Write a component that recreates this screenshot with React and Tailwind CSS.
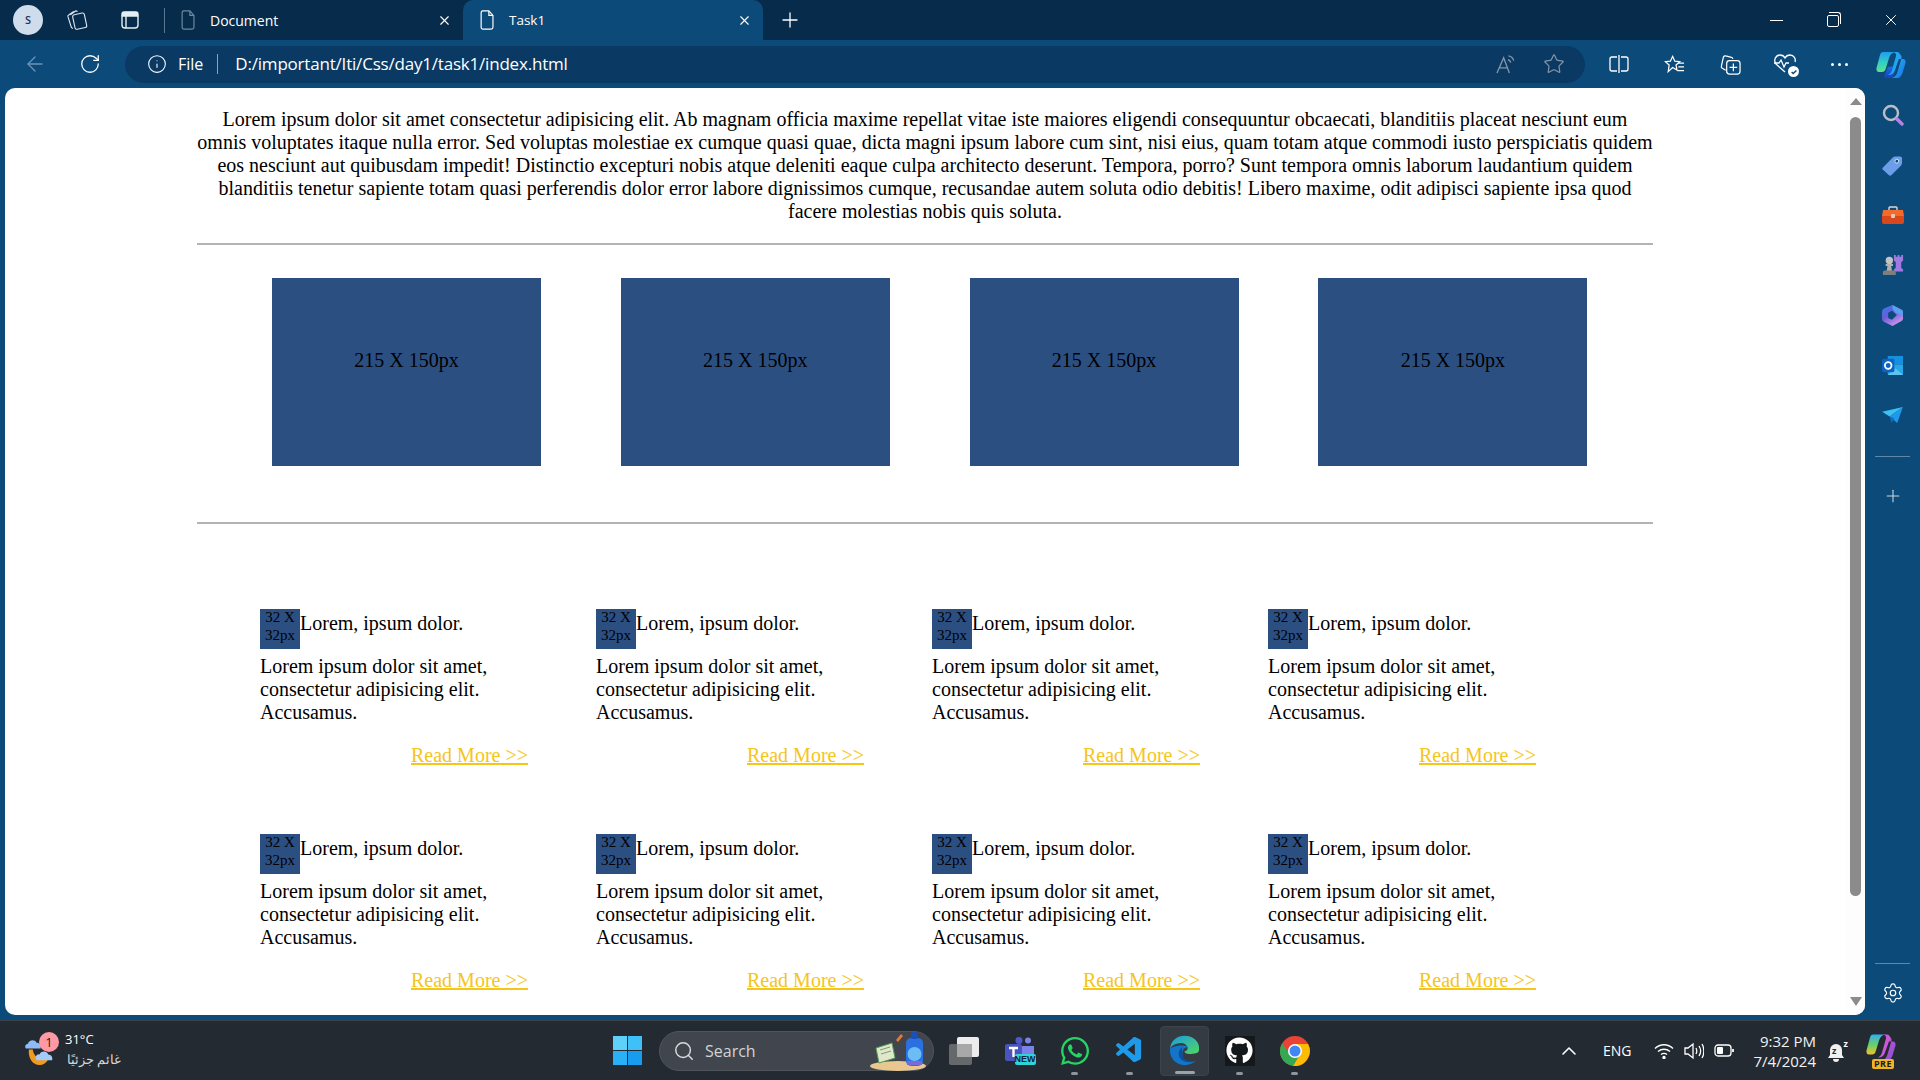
import React from 'react';
import { X, Plus, ArrowLeft, RotateCw, Info, Star, Search, Settings, ChevronUp } from 'lucide-react';
import { FaGithub, FaWhatsapp } from 'react-icons/fa';
import { VscVscode } from 'react-icons/vsc';

const lorem = 'Lorem ipsum dolor sit amet consectetur adipisicing elit. Ab magnam officia maxime repellat vitae iste maiores eligendi consequuntur obcaecati, blanditiis placeat nesciunt eum omnis voluptates itaque nulla error. Sed voluptas molestiae ex cumque quasi quae, dicta magni ipsum labore cum sint, nisi eius, quam totam atque commodi iusto perspiciatis quidem eos nesciunt aut quibusdam impedit! Distinctio excepturi nobis atque deleniti eaque culpa architecto deserunt. Tempora, porro? Sunt tempora omnis laborum laudantium quidem blanditiis tenetur sapiente totam quasi perferendis dolor error labore dignissimos cumque, recusandae autem soluta odio debitis! Libero maxime, odit adipisci sapiente ipsa quod facere molestias nobis quis soluta.';

const FileIcon = ({ className }) => (
    <svg viewBox="0 0 16 22" fill="none" stroke="currentColor" strokeWidth="1.3" className={className}>
        <path d="M2.5 1h7l4.500 5v13a2 2 0 0 1-2 2h-9a2 2 0 0 1-2-2V3a2 2 0 0 1 1.500-2z" />
        <path d="M9.500 1v5h4.500" />
    </svg>
);

const CollectionsTabIcon = () => (
    <svg viewBox="0 0 22 24" width="21" height="24" fill="none" stroke="#dbe6f0" strokeWidth="1.2">
        <path d="M1 8.500a1.500 1.500 0 0 1 .8-1.800L7 3M3.500 6.500L9 2.500l2 .5" />
        <path d="M1 8.500l3.500 11 1.500 1.500" />
        <rect x="7" y="5.500" width="12.500" height="15.500" rx="2" transform="rotate(-12 13 13)" />
    </svg>
);

const TabActionsIcon = () => (
    <svg viewBox="0 0 18 18" width="18" height="18" fill="none" stroke="#e6eef5" strokeWidth="1.4">
        <rect x="1" y="1" width="16" height="16" rx="3" />
        <path d="M1.500 1.500h15v3.500h-15z" fill="#e6eef5" />
        <path d="M5 5v12" />
    </svg>
);

const ReadAloudIcon = () => (
    <svg viewBox="0 0 22 20" width="21" height="19" fill="none" stroke="#8497a8" strokeWidth="1.4">
        <path d="M1 19L8 3l6 16M3.500 13.500h9" />
        <path d="M13 1c3 .5 5 2.500 5.500 5M12.500 5c1.500.3 2.500 1.300 3 3" />
    </svg>
);

const SplitIcon = () => (
    <svg viewBox="0 0 20 20" width="20" height="20" fill="none" stroke="#fff" strokeWidth="1.3">
        <path d="M8 3H3a2 2 0 0 0-2 2v10a2 2 0 0 0 2 2h5M12 3h5a2 2 0 0 1 2 2v10a2 2 0 0 1-2 2h-5M10 1v18" />
    </svg>
);

const FavoritesIcon = () => (
    <svg viewBox="0 0 22 20" width="21" height="20" fill="none" stroke="#fff" strokeWidth="1.3">
        <path d="M9 2l2.300 5 5.200.6-3.900 3.500 1 5.200L9 13.700 4.400 18l1-6.900L1.500 7.600 6.700 7z" />
        <path d="M15 9h6M15 13h6M14 17h7" />
    </svg>
);

const CollectionsIcon = () => (
    <svg viewBox="0 0 22 22" width="21" height="21" fill="none" stroke="#fff" strokeWidth="1.3">
        <path d="M6 17L2.500 15a2 2 0 0 1-1-2.500L3.500 3.500A2 2 0 0 1 6 2l6 1.500a2 2 0 0 1 1.500 1.500" />
        <rect x="7" y="7" width="14" height="14" rx="3" />
        <path d="M14 10v8M10 14h8" />
    </svg>
);

const HeartIcon = () => (
    <div className="relative w-[24px] h-[22px]">
        <svg viewBox="0 0 24 22" width="24" height="22" fill="none" stroke="#fff" strokeWidth="1.3">
            <path d="M12 19L3 11C0 7 3 2 7 2c2 0 4 1 5 3 1-2 3-3 5-3 4 0 6 4 5 7" />
            <path d="M1 10h5l2-3 3 7 2-4h3" />
        </svg>
        <div className="absolute right-[-2px] bottom-[-2px] w-[11px] h-[11px] rounded-full bg-white flex items-center justify-center">
            <svg viewBox="0 0 10 10" width="8" height="8" fill="none" stroke="#0c4a7a" strokeWidth="1.800"><path d="M2 5l2 2 4-4" /></svg>
        </div>
    </div>
);

const CopilotIcon = () => (
    <svg viewBox="0 0 30 27" width="30" height="27">
        <defs>
            <linearGradient id="cpA" x1="0.300" y1="0" x2="0.300" y2="1">
                <stop offset="0" stopColor="#1f9cf0" />
                <stop offset="0.55" stopColor="#35d0c0" />
                <stop offset="1" stopColor="#60e090" />
            </linearGradient>
            <linearGradient id="cpB" x1="0" y1="0" x2="1" y2="1">
                <stop offset="0" stopColor="#30c0f5" />
                <stop offset="1" stopColor="#1670e8" />
            </linearGradient>
            <linearGradient id="cpC" x1="0" y1="0" x2="0" y2="1">
                <stop offset="0" stopColor="#1a6ee0" />
                <stop offset="1" stopColor="#1c40c0" />
            </linearGradient>
        </defs>
        <path d="M7 1h12c-3 .5-5 3-6 6l-3 10c-1 3-2 4-4 4H3c-2 0-3-2-2.500-4L4 4c.5-2 1.500-3 3-3z" fill="url(#cpA)" />
        <path d="M12 16l8-1-2 8c-.5 2-2 4-4 4h-4c-1.500 0-2-2-1-4z" fill="url(#cpC)" />
        <path d="M17 1c3 0 4 2 4.500 4L22 8h5c2 0 3 2 2.500 4l-3 10c-1 3-3 5-5 5h-6c3-.5 5-3 6-6l4-14c.5-2-1-4-3-4z" fill="url(#cpB)" />
        <path d="M21 1h-4c2 0 3.500 2 3 4l-4 14c-.5 2-2 4-4 5 4 0 6-2 7-5l5-14c.5-2-1-4-3-4z" fill="#21a5f0" />
    </svg>
);

const SideSearch = () => (
    <svg viewBox="0 0 22 22" width="22" height="22">
        <circle cx="9" cy="9" r="7" fill="none" stroke="#b9bfc4" strokeWidth="2.400" />
        <path d="M15 15l5 5" stroke="#b583e8" strokeWidth="3.400" strokeLinecap="round" />
    </svg>
);

const SideTag = () => (
    <svg viewBox="0 0 22 22" width="21" height="21">
        <path d="M1 13L11 3c1-1 2-1.500 3-1.500h5c1 0 2 1 2 2v5c0 1-.5 2-1.500 3L10 21c-1 1-2 1-3 0l-6-5.500c-1-.8-.8-1.800 0-2.500z" fill="#6b9de8" />
        <circle cx="15.500" cy="6.500" r="2" fill="#0c4a7a" stroke="#dfe9fa" strokeWidth="1" />
    </svg>
);

const SideTools = () => (
    <svg viewBox="0 0 22 18" width="22" height="18">
        <path d="M7 4V2a1 1 0 0 1 1-1h6a1 1 0 0 1 1 1v2" fill="none" stroke="#d8d8d8" strokeWidth="1.400" />
        <path d="M1 4h20l1 6H0z" fill="#f46a2a" />
        <path d="M0 10h22v6a2 2 0 0 1-2 2H2a2 2 0 0 1-2-2z" fill="#d8481a" />
        <rect x="9" y="8" width="4" height="4" rx="1" fill="#e8c8b8" />
    </svg>
);

const SideChess = () => (
    <svg viewBox="0 0 24 24" width="22" height="22">
        <path d="M13 1h2v2h2V1h2v2h2V1h2v6l-2 2v6l2 2v2H13v-2l2-2V9l-2-2z" fill="#a07ae0" />
        <circle cx="8" cy="7" r="4" fill="#c4c4c4" />
        <path d="M4 11h8v2h-2l1 6H5l1-6H4z" fill="#b0b0b0" />
        <path d="M1 20a2 2 0 0 1 2-2h10a2 2 0 0 1 2 2v3H1z" fill="#7e7e7e" />
    </svg>
);

const SideM365 = () => (
    <svg viewBox="0 0 22 22" width="21" height="21">
        <defs>
            <linearGradient id="m3" x1="0" y1="0" x2="0.600" y2="1">
                <stop offset="0" stopColor="#2f7fe8" />
                <stop offset="0.5" stopColor="#6a5cd8" />
                <stop offset="1" stopColor="#c995ea" />
            </linearGradient>
        </defs>
        <path d="M11 0l8.500 4.500a3 3 0 0 1 2.500 3V14a3 3 0 0 1-2 3l-9 5-8-4a4 4 0 0 1-3-4V7a4 4 0 0 1 2.500-3.500z" fill="url(#m3)" />
        <path d="M11 0l8.500 4.500a3 3 0 0 1 2.500 3V11l-8-3-3-4z" fill="#5aa0ee" />
        <path d="M6.500 8l4-2 5 4.500-5 5-4-2z" fill="#0c4a7a" />
    </svg>
);

const SideOutlook = () => (
    <svg viewBox="0 0 22 22" width="21" height="21">
        <rect x="6" y="1" width="16" height="9" fill="#1490df" />
        <rect x="6" y="10" width="16" height="11" rx="1" fill="#2aa5e8" />
        <path d="M6 21l8-7 8 7z" fill="#5cc4f0" />
        <rect x="0" y="4" width="13" height="14" rx="2" fill="#0a64c4" />
        <circle cx="6.500" cy="11" r="3.500" fill="none" stroke="#fff" strokeWidth="1.800" />
    </svg>
);

const SideSend = () => (
    <svg viewBox="0 0 22 18" width="21" height="17">
        <path d="M0 5L22 0 8 10z" fill="#3cc0f5" />
        <path d="M22 0L16 17 8 10z" fill="#1f9ae8" />
        <path d="M8 10l2 7 3-5z" fill="#0f6fc0" />
    </svg>
);

const Weather = () => (
    <svg viewBox="0 0 32 32" width="31" height="31">
        <path d="M4 15c-1 9 4 16 11 16 4 0 7-2 9-6-8 2-15-2-16-10z" fill="#f09a20" />
        <path d="M1 14a3 3 0 0 1 2-5c1-4 7-5 9-1 3 0 5 2 4 6z" fill="#8fbcf5" />
        <path d="M12 26a3.500 3.500 0 0 1 3-6c1-4 8-4 9 0 3 0 5 3 4 6z" fill="#a4ccf8" />
    </svg>
);

const WindowsLogo = () => (
    <div className="grid grid-cols-2 gap-[1.500px] w-[29px] h-[29px]">
        <div className="bg-[#5fd0fa]" />
        <div className="bg-[#3fc0f8]" />
        <div className="bg-[#2ab0f5]" />
        <div className="bg-[#189cf0]" />
    </div>
);

const SearchArt = () => (
    <svg viewBox="0 0 56 42" width="56" height="42">
        <ellipse cx="28" cy="36" rx="28" ry="5" fill="#e8c890" />
        <path d="M6 18l16-5 3 15-16 5z" fill="#dfe8c8" stroke="#5a9a5a" strokeWidth="1" />
        <path d="M10 20l10-3M11 24l10-3" stroke="#7a9a7a" strokeWidth="1" />
        <path d="M26 10l5-6 2 2-5 6z" fill="#e87a30" />
        <rect x="36" y="8" width="17" height="28" rx="5" fill="#2a70e0" />
        <rect x="41" y="2" width="7" height="7" rx="2" fill="#1a50b8" />
        <circle cx="44.500" cy="24" r="7" fill="#6cbcf5" />
        <rect x="37" y="31" width="15" height="4" fill="#7a6ad8" />
    </svg>
);

const TaskView = () => (
    <div className="relative w-[30px] h-[28px]">
        <div className="absolute left-[8px] top-0 w-[22px] h-[20px] rounded-[2px] bg-[#ececec]" />
        <div className="absolute left-0 top-[7px] w-[23px] h-[21px] rounded-[2px] bg-[#66696c]" />
        <div className="absolute left-[8px] top-[7px] w-[15px] h-[13px] bg-[#a8a8a8]" />
    </div>
);

const Teams = () => (
    <div className="relative w-[30px] h-[28px]">
        <svg viewBox="0 0 30 27" width="30" height="27">
            <circle cx="23" cy="3.500" r="3" fill="#7b83eb" />
            <circle cx="14" cy="3.500" r="3.500" fill="#5059c9" />
            <path d="M17 9h12v9a4 4 0 0 1-4 4h-8z" fill="#7b83eb" />
            <rect x="0" y="7" width="17" height="17" rx="2" fill="#4b53bc" />
            <path d="M4 11h9M8.500 11v9" stroke="#fff" strokeWidth="2.400" />
        </svg>
        <div className="absolute right-[-1px] bottom-0 w-[21px] h-[11px] bg-[#2fd3d8] rounded-[2px] text-[9px] leading-[11px] font-bold text-[#10233a] text-center font-['Liberation_Sans',sans-serif]">NEW</div>
    </div>
);

const Edge = () => (
    <svg viewBox="0 0 32 36" width="31" height="31" preserveAspectRatio="none">
        <defs>
            <linearGradient id="edA" x1="0" y1="0" x2="1" y2="1">
                <stop offset="0" stopColor="#1a9ce0" />
                <stop offset="1" stopColor="#50d860" />
            </linearGradient>
        </defs>
        <path d="M1 16C2 6 9 1 16 1c9 0 16 7 15 16 0 4-5 5-10 5-3 0-5-1-5-3 2 0 4-2 3-5-1-4-6-6-10-4-4 1-7 3-8 6z" fill="url(#edA)" />
        <path d="M1 16c-1 10 6 19 15 19 5 0 9-2 12-5-5 3-13 1-14-6-1-5 1-10 6-10-7-4-18 0-19 2z" fill="#1275c8" />
        <path d="M14 22c0 7 7 10 14 8-6 3-14 2-17-4-2-4-1-9 3-12-1 3-1 6 0 8z" fill="#0c4f9c" />
    </svg>
);

const Chrome = () => (
    <svg viewBox="0 0 30 30" width="30" height="30">
        <circle cx="15" cy="15" r="15" fill="#ea4335" />
        <path d="M2 7.500a15 15 0 0 0 11 22.400L20 18H10z" fill="#34a853" />
        <path d="M15 8h13a15 15 0 0 1-15 22l8-13z" fill="#fbbc04" />
        <circle cx="15" cy="15" r="7" fill="#fff" />
        <circle cx="15" cy="15" r="5.500" fill="#4285f4" />
    </svg>
);

const Dock = ({ children, on, active }) => (
    <div className="w-[55px] h-[50px] flex justify-center">
        <div className={active ? 'relative w-[49px] h-[50px] flex items-center justify-center bg-[#343b43] rounded-[4px] border border-[#3c434b]' : 'relative w-[49px] h-[50px] flex items-center justify-center'}>
            {children}
            {on && <div className={active ? 'absolute bottom-[1px] h-[3px] rounded-full w-[20px] bg-[#9aa4ad]' : 'absolute bottom-[1px] h-[3px] rounded-full w-[7px] bg-[#8e959b]'} />}
        </div>
    </div>
);

const Tray = () => (
    <div className="flex items-center text-white">
        <ChevronUp className="w-[24px] h-[24px]" strokeWidth={1.600} />
        <span className="ml-[22px] w-[28px] text-[14px] leading-none">ENG</span>
        <svg className="ml-[23px]" viewBox="0 0 20 16" width="20" height="16" fill="none" stroke="#fff" strokeWidth="1.400">
            <path d="M1 5.500c5-5 13-5 18 0M4 8.500c3.500-3 8.500-3 12 0M7 11.500c2-1.500 4-1.500 6 0" />
            <circle cx="10" cy="14.500" r="1" fill="#fff" />
        </svg>
        <svg className="ml-[10px]" viewBox="0 0 20 18" width="20" height="18" fill="none" stroke="#fff" strokeWidth="1.300">
            <path d="M1 6h3l5-4v14l-5-4H1zM12 6c1 2 1 4 0 6M15 4c2 3 2 7 0 10M18 2c2.500 4 2.500 10 0 14" />
        </svg>
        <svg className="ml-[10px]" viewBox="0 0 20 14" width="20" height="14" fill="none" stroke="#fff" strokeWidth="1.300">
            <rect x="1" y="1" width="16" height="11" rx="3" />
            <rect x="3" y="3" width="6" height="7" rx="1" fill="#fff" stroke="none" />
            <path d="M19 5v3" strokeWidth="1.800" />
        </svg>
    </div>
);

const Card = () => (
    <div className="w-[268px] text-[20px] leading-[23px] text-black">
        <div className="flex items-start">
            <div className="w-[40px] h-[40px] bg-[#2c4f82] text-[15px] leading-[17.500px] text-center">32 X 32px</div>
            <div className="mt-[3px]">Lorem, ipsum dolor.</div>
        </div>
        <p className="mt-[6px]">Lorem ipsum dolor sit amet, consectetur adipisicing elit. Accusamus.</p>
        <div className="mt-[20px] text-right text-[#f5c518] underline">Read More &gt;&gt;</div>
    </div>
);

const sideIcons = [SideSearch, SideTag, SideTools, SideChess, SideM365, SideOutlook, SideSend];

export default function App() {
    return (
        <div className="w-[1920px] h-[1080px] overflow-hidden flex flex-col bg-[#0c4a7a] font-['Open_Sans',sans-serif]">
            {/* tab strip */}
            <div className="h-[40px] shrink-0 flex items-center bg-[#072b4a] text-white">
                <div className="ml-[13px] w-[30px] h-[30px] rounded-full bg-[#cfdcec] flex items-center justify-center text-[11px] font-semibold text-[#1d3557]">S</div>
                <div className="ml-[24px] flex"><CollectionsTabIcon /></div>
                <div className="ml-[33px] flex"><TabActionsIcon /></div>
                <div className="ml-[25px] w-px h-[25px] bg-[#5a7890]" />
                <div className="w-[298px] h-full flex items-center pl-[16px]">
                    <FileIcon className="w-[15px] h-[20px] text-[#6c8aa2]" />
                    <span className="ml-[14px] text-[14px] flex-1">Document</span>
                    <X className="w-[15px] h-[15px] mr-[11px]" strokeWidth={1.800} />
                </div>
                <div className="w-[300px] h-full flex items-center pl-[17px] bg-[#0c4a7a] rounded-t-[10px]">
                    <FileIcon className="w-[15px] h-[20px] text-white" />
                    <span className="ml-[14px] text-[13.500px] flex-1">Task1</span>
                    <X className="w-[15px] h-[15px] mr-[11px]" strokeWidth={1.800} />
                </div>
                <Plus className="ml-[15px] w-[24px] h-[24px]" strokeWidth={1.300} />
                <div className="flex-1" />
                <div className="w-[13px] h-px bg-white mr-[44px]" />
                <div className="relative w-[12px] h-[12px] border border-white rounded-[2px] mr-[43px] mt-[2px]">
                    <div className="absolute left-[1px] top-[-4px] w-[12px] h-[12px] border-t border-r border-white rounded-tr-[3px]" />
                </div>
                <X className="w-[18px] h-[18px] mr-[20px]" strokeWidth={1.300} />
            </div>

            {/* toolbar */}
            <div className="h-[48px] shrink-0 flex items-center text-white">
                <ArrowLeft className="ml-[23px] w-[24px] h-[24px] text-[#6e94b5]" strokeWidth={1.300} />
                <RotateCw className="ml-[32px] w-[22px] h-[22px]" strokeWidth={1.400} />
                <div className="ml-[24px] w-[1460px] h-[37px] rounded-full bg-[#0a3a63] flex items-center">
                    <Info className="ml-[22px] w-[20px] h-[20px]" strokeWidth={1.300} />
                    <span className="ml-[11px] text-[16px]">File</span>
                    <div className="ml-[14px] w-px h-[20px] bg-[#8aa4ba]" />
                    <span className="ml-[17px] text-[17px] tracking-[-0.200px]">D:/important/Iti/Css/day1/task1/index.html</span>
                    <div className="flex-1" />
                    <ReadAloudIcon />
                    <Star className="ml-[26px] mr-[20px] w-[22px] h-[22px] text-[#8497a8]" strokeWidth={1.300} />
                </div>
                <div className="ml-[24px] flex"><SplitIcon /></div>
                <div className="ml-[35px] flex"><FavoritesIcon /></div>
                <div className="ml-[35px] flex"><CollectionsIcon /></div>
                <div className="ml-[32px] flex"><HeartIcon /></div>
                <div className="ml-[34px] flex gap-[4px]">
                    <div className="w-[3px] h-[3px] rounded-full bg-white" />
                    <div className="w-[3px] h-[3px] rounded-full bg-white" />
                    <div className="w-[3px] h-[3px] rounded-full bg-white" />
                </div>
                <div className="ml-[28px] flex"><CopilotIcon /></div>
            </div>

            {/* page + sidebar */}
            <div className="h-[932px] shrink-0 flex">
                <div className="ml-[5px] w-[1860px] h-[927px] bg-white rounded-[10px] overflow-hidden flex">
                    <div className="w-[1841px] h-full overflow-hidden font-['Liberation_Serif',serif] text-[20px] leading-[23px] text-black">
                        <div className="w-[1456px] ml-[192px] pt-[20px]">
                            <p className="text-center">{lorem}</p>
                            <div className="mt-[20px] h-[2px] bg-[#b4b4b4]" />
                            <div className="mt-[33px] pl-[75px] flex gap-[79.800px]">
                                {[0, 1, 2, 3].map((i) => (
                                    <div key={i} className="w-[269px] h-[188px] bg-[#2c4f82] pt-[71px] text-center">215 X 150px</div>
                                ))}
                            </div>
                            <div className="mt-[56px] h-[2px] bg-[#b4b4b4]" />
                            <div className="mt-[85px] pl-[63px] grid grid-cols-[336px_336px_336px_336px] gap-y-[67px]">
                                {[0, 1, 2, 3, 4, 5, 6, 7].map((i) => (
                                    <Card key={i} />
                                ))}
                            </div>
                        </div>
                    </div>
                    <div className="w-[19px] h-full bg-[#fdfdfd] flex flex-col items-center">
                        <div className="mt-[10px] w-0 h-0 border-x-[6px] border-x-transparent border-b-[7px] border-b-[#8b8b8b]" />
                        <div className="mt-[12px] w-[11px] h-[779px] rounded-full bg-[#8b8b8b]" />
                        <div className="mt-[101px] w-0 h-0 border-x-[6px] border-x-transparent border-t-[9px] border-t-[#8b8b8b]" />
                    </div>
                </div>

                <div className="w-[55px] flex flex-col items-center text-white">
                    <div className="pt-[2px] flex flex-col items-center w-full">
                        {sideIcons.map((Icon, i) => (
                            <div key={i} className="h-[50px] w-full flex items-center justify-center"><Icon /></div>
                        ))}
                    </div>
                    <div className="mt-[16px] w-[35px] h-px bg-[#5f88a8]" />
                    <Plus className="mt-[29px] w-[20px] h-[20px] text-[#c8d6e2]" strokeWidth={1.300} />
                    <div className="flex-1" />
                    <div className="w-[35px] h-px bg-[#5f88a8]" />
                    <Settings className="mt-[18px] mb-[16px] w-[22px] h-[22px]" strokeWidth={1.300} />
                </div>
            </div>

            {/* taskbar */}
            <div className="h-[60px] shrink-0 flex items-center bg-[#232a32] border-t border-[#3a424b] text-white">
                <div className="relative ml-[25px] w-[40px] flex">
                    <Weather />
                    <div className="absolute left-[14px] top-[-3px] w-[20px] h-[20px] rounded-full bg-[#ff99a4] text-[#1a1a1a] text-[13px] leading-[20px] text-center">1</div>
                </div>
                <div className="w-[60px] flex flex-col">
                    <span className="text-[13px] leading-[17px]">31°C</span>
                    <span className="w-[56px] text-[13px] leading-[23px] text-[#d4d7da] whitespace-nowrap" dir="rtl">غائم جزئيًا</span>
                </div>
                <div className="ml-[488px] flex"><WindowsLogo /></div>
                <div className="ml-[17px] w-[275px] h-[40px] rounded-full bg-[#41464e] border border-[#50555c] flex items-center">
                    <Search className="ml-[13px] w-[22px] h-[22px] text-[#d8dcdf]" strokeWidth={1.600} />
                    <span className="ml-[10px] text-[16px] text-[#d0d3d6]">Search</span>
                    <div className="flex-1" />
                    <div className="mr-[7px] flex"><SearchArt /></div>
                </div>
                <div className="ml-[15px] w-[30px] flex justify-center"><TaskView /></div>
                <div className="ml-[13px] flex">
                    <Dock><Teams /></Dock>
                    <Dock on><FaWhatsapp className="w-[32px] h-[32px] text-[#25d366]" /></Dock>
                    <Dock on><VscVscode className="w-[31px] h-[31px] text-[#1f9ae8]" /></Dock>
                    <Dock on active><Edge /></Dock>
                    <Dock on><div className="w-[30px] h-[30px] bg-[#15181b] flex items-center justify-center"><FaGithub className="w-[27px] h-[27px] text-white" /></div></Dock>
                    <Dock on><Chrome /></Dock>
                </div>
                <div className="flex-1" />
                <Tray />
                <div className="ml-[22px] w-[60px] flex flex-col items-end text-[15px] leading-[20px] text-[#f2f2f2] whitespace-nowrap">
                    <div>9:32 PM</div>
                    <div>7/4/2024</div>
                </div>
                <div className="relative ml-[11px] w-[18px] h-[22px] flex">
                    <svg viewBox="0 0 18 20" width="18" height="20" fill="#f0f0f0" className="mt-[2px]">
                        <path d="M9 2a6 6 0 0 1 6 6v5l2 3H1l2-3V8a6 6 0 0 1 6-6zM6 17h6a3 3 0 0 1-6 0z" />
                    </svg>
                    <span className="absolute left-[5px] top-[6px] text-[9px] leading-[9px] font-bold text-[#232a32]">z</span>
                    <span className="absolute right-[-3px] top-[-1px] text-[9px] leading-[9px] font-bold text-white">z</span>
                </div>
                <div className="relative ml-[21px] mr-[24px] w-[30px] h-[36px] flex items-start">
                    <svg viewBox="0 0 30 27" width="30" height="28">
                        <defs>
                            <linearGradient id="prA" x1="0.300" y1="0" x2="0.300" y2="1">
                                <stop offset="0" stopColor="#30b0f0" />
                                <stop offset="0.55" stopColor="#70d060" />
                                <stop offset="1" stopColor="#f0c030" />
                            </linearGradient>
                            <linearGradient id="prB" x1="0" y1="0" x2="1" y2="1">
                                <stop offset="0" stopColor="#e050c0" />
                                <stop offset="1" stopColor="#8050e0" />
                            </linearGradient>
                        </defs>
                        <path d="M7 1h12c-3 .5-5 3-6 6l-3 10c-1 3-2 4-4 4H3c-2 0-3-2-2.500-4L4 4c.5-2 1.500-3 3-3z" fill="url(#prA)" />
                        <path d="M17 1c3 0 4 2 4.500 4L22 8h5c2 0 3 2 2.500 4l-3 10c-1 3-3 5-5 5h-6c3-.5 5-3 6-6l4-14c.5-2-1-4-3-4z" fill="url(#prB)" />
                        <path d="M21 1h-4c2 0 3.500 2 3 4l-4 14c-.5 2-2 4-4 5 4 0 6-2 7-5l5-14c.5-2-1-4-3-4z" fill="#c85ad8" />
                    </svg>
                    <div className="absolute bottom-0 left-[6px] w-[22px] h-[10px] rounded-[2px] bg-[#f0b428] text-[#1a1a1a] text-[9px] leading-[10px] font-bold text-center tracking-[0.500px]">PRE</div>
                </div>
            </div>
        </div>
    );
}
